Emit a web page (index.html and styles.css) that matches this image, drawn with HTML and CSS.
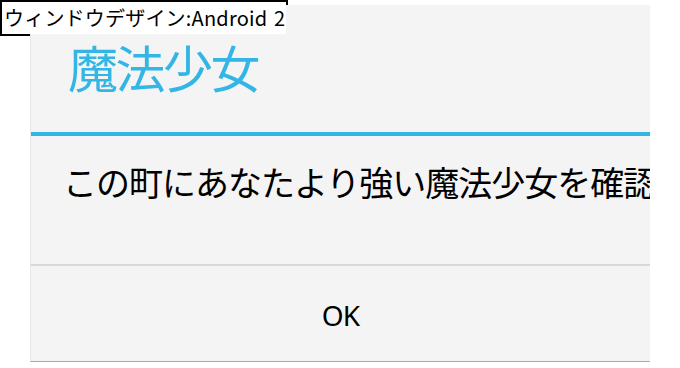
FILE: index.html
```html
<!DOCTYPE html>
<html lang="ja">
<head>
    <meta charset="UTF-8">
    <meta name="viewport" content="width=device-width, initial-scale=1.0">
    <title>ウィンドウデザイン:Android 2</title>
    <link rel="stylesheet" href="styles.css">
</head>
<body>

    <div class="caption-frame"></div>
    <div class="caption-text">ウィンドウデザイン:Android 2</div>

    <div class="dialog">
        <div class="dialog-title">魔法少女</div>
        <div class="dialog-message">この町にあなたより強い魔法少女を確認</div>
        <div class="dialog-buttons">
            <button type="button" class="dialog-btn">OK</button>
        </div>
    </div>

</body>
</html>
```

FILE: styles.css
```css
* {
    margin: 0;
    padding: 0;
    box-sizing: border-box;
    font-family: 'Noto Sans CJK JP', 'Noto Sans', sans-serif;
}

body {
    background: white;
    width: 680px;
    height: 368px;
    overflow: hidden;
    position: relative;
}

/* caption label sits half under the dialog */
.caption-frame {
    position: absolute;
    top: 0;
    left: 0;
    width: 288px;
    height: 36px;
    border: 2px solid #000;
    border-bottom-width: 3px;
    background: white;
    z-index: 0;
}

.caption-text {
    position: absolute;
    top: 2px;
    left: 2px;
    width: 284px;
    height: 32px;
    padding-left: 2px;
    background: white;
    color: #000;
    font-size: 20px;
    line-height: 32px;
    letter-spacing: 0.2px;
    word-spacing: 2px;
    white-space: nowrap;
    z-index: 2;
}

.dialog {
    position: relative;
    z-index: 1;
    margin: 5px 0 0 30px;
    width: 620px;
    height: 357px;
    background: #f4f4f4;
    border-left: 1px solid #e6e6e6;
    border-bottom: 1px solid #a8a8a8;
    display: flex;
    flex-direction: column;
    overflow: hidden;
}

.dialog-title {
    height: 131px;
    padding-left: 37px;
    display: flex;
    align-items: center;
    color: #33b5e5;
    font-size: 50px;
    letter-spacing: -2.5px;
    border-bottom: 4px solid #33b5e5;
    padding-bottom: 6px;
}

.dialog-message {
    height: 130px;
    padding-left: 32px;
    display: flex;
    align-items: center;
    color: #000;
    font-size: 34px;
    letter-spacing: -1px;
    white-space: nowrap;
    border-bottom: 2px solid #d8d8d8;
    padding-bottom: 38px;
}

.dialog-buttons {
    flex: 1;
    display: flex;
}

.dialog-btn {
    flex: 1;
    background: none;
    border: none;
    color: #000;
    font-size: 28px;
    font-family: 'Noto Sans', sans-serif;
    letter-spacing: -0.8px;
    padding-top: 3px;
    cursor: pointer;
}
```
